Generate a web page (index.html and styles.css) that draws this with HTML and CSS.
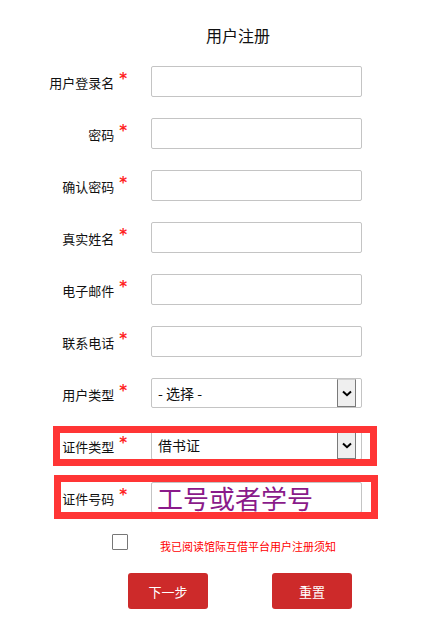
FILE: index.html
```html
<!DOCTYPE html>
<html lang="zh-CN">
<head>
<meta charset="utf-8">
<title>用户注册</title>
<link rel="stylesheet" href="styles.css">
</head>
<body>
<div class="page">
  <h1 class="title">用户注册</h1>
  <form class="form">
    <label class="lbl">用户登录名<span class="req">*</span></label>
    <input class="field" type="text">
    <label class="lbl">密码<span class="req">*</span></label>
    <input class="field" type="password">
    <label class="lbl">确认密码<span class="req">*</span></label>
    <input class="field" type="password">
    <label class="lbl">真实姓名<span class="req">*</span></label>
    <input class="field" type="text">
    <label class="lbl">电子邮件<span class="req">*</span></label>
    <input class="field" type="text">
    <label class="lbl">联系电话<span class="req">*</span></label>
    <input class="field" type="text">
    <label class="lbl">用户类型<span class="req">*</span></label>
    <div class="sel-wrap">
      <select class="sel"><option>- 选择 -</option></select>
      <span class="sel-btn"><svg width="10" height="7" viewBox="0 0 10 7"><path d="M1 1.5 L5 5.2 L9 1.5" fill="none" stroke="#000" stroke-width="2"/></svg></span>
    </div>
    <label class="lbl">证件类型<span class="req">*</span></label>
    <div class="sel-wrap">
      <select class="sel"><option>借书证</option></select>
      <span class="sel-btn"><svg width="10" height="7" viewBox="0 0 10 7"><path d="M1 1.5 L5 5.2 L9 1.5" fill="none" stroke="#000" stroke-width="2"/></svg></span>
    </div>
    <label class="lbl">证件号码<span class="req">*</span></label>
    <input class="field big" type="text" value="工号或者学号">
  </form>
  <div class="agree">
    <span class="box"></span>
    <span class="agree-text">我已阅读馆际互借平台用户注册须知</span>
  </div>
  <div class="actions">
    <button class="btn" type="button">下一步</button>
    <button class="btn" type="button">重置</button>
  </div>
  <div class="mark mark-a"></div>
  <div class="mark mark-b"></div>
</div>
</body>
</html>
```

FILE: styles.css
```css
html, body {
  margin: 0;
  padding: 0;
  background: #fff;
}
body {
  font-family: "Noto Sans CJK SC", "Noto Sans", sans-serif;
  color: #222;
}
.page {
  position: relative;
  width: 422px;
  height: 637px;
  overflow: hidden;
}
.title {
  margin: 0;
  padding: 26px 0 0 54px;
  text-align: center;
  font-size: 16px;
  font-weight: normal;
  line-height: 18px;
  color: #111;
}
.form {
  margin: 22px 0 0 0;
  display: grid;
  grid-template-columns: 127px 211px;
  grid-auto-rows: 31px;
  column-gap: 24px;
  row-gap: 21px;
}
.lbl {
  display: flex;
  justify-content: flex-end;
  align-items: center;
  font-size: 13px;
  color: #111;
  padding-top: 2px;
}
.req {
  color: #f22;
  font-size: 15px;
  font-weight: bold;
  margin-left: 5px;
  position: relative;
  top: -4px;
  font-family: "DejaVu Sans", sans-serif;
}
.field {
  box-sizing: border-box;
  width: 211px;
  height: 31px;
  margin: 0;
  border: 1px solid #c4c4c4;
  border-radius: 2px;
  padding: 0 6px;
  font-family: inherit;
  font-size: 14px;
  background: #fff;
}
.field.big {
  font-size: 26px;
  color: #8a1a8a;
  padding: 0 5px;
  line-height: 29px;
}
.sel-wrap {
  position: relative;
  width: 211px;
  height: 30px;
}
.sel {
  box-sizing: border-box;
  width: 211px;
  height: 30px;
  margin: 0;
  -webkit-appearance: none;
  appearance: none;
  border: 1px solid #c4c4c4;
  border-radius: 2px;
  background: #fff;
  padding: 0 6px;
  font-family: inherit;
  font-size: 14px;
  color: #111;
}
.sel-btn {
  position: absolute;
  right: 6px;
  top: 1px;
  bottom: 1px;
  width: 19px;
  box-sizing: border-box;
  background: #efefef;
  border: 1px solid #7a7a7a;
  border-top-color: #d0d0d0;
  display: flex;
  align-items: center;
  justify-content: center;
}
.agree {
  display: flex;
  align-items: flex-start;
  margin: 21px 0 0 112px;
  height: 20px;
}
.box {
  box-sizing: border-box;
  width: 16px;
  height: 16px;
  border: 1px solid #777;
  border-radius: 1px;
}
.agree-text {
  margin: 5px 0 0 32px;
  font-size: 11px;
  line-height: 14px;
  color: #f00;
}
.actions {
  display: flex;
  gap: 64px;
  margin: 19px 0 0 128px;
}
.btn {
  width: 80px;
  height: 36px;
  border: none;
  border-radius: 3px;
  background: #cd2a2a;
  color: #fff;
  font-family: inherit;
  font-size: 13px;
  padding: 0;
}
.mark {
  position: absolute;
  box-sizing: border-box;
  border: 7px solid #ff3535;
}
.mark-a {
  left: 53px;
  top: 426px;
  width: 324px;
  height: 40px;
}
.mark-b {
  left: 54px;
  top: 475px;
  width: 324px;
  height: 44px;
}
```
